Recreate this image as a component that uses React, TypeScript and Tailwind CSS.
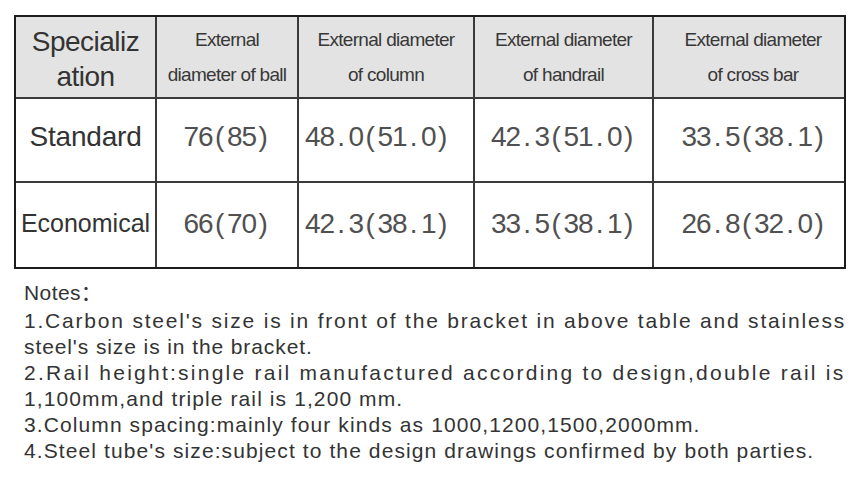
import React from "react";

const Mono = ({ text }: { text: string }) => (
  <span className="inline-flex text-[#505050]">
    {text.split("").map((c, i) => (
      <span key={i} className="inline-block w-[14.5px] text-center">
        {c}
      </span>
    ))}
  </span>
);

const cellBase = "flex flex-col items-center justify-center border-[#3a3a3a]";
const head = "text-[#383838] text-[19px] leading-[35px] tracking-[-0.7px]";

export default function App() {
  const font = { fontFamily: '"Liberation Sans", Arial, "Noto Sans CJK SC", sans-serif' };
  return (
    <div className="w-[864px] h-[485px] bg-white overflow-hidden" style={font}>
      <div className="ml-[14px] mt-[15px] w-[832px] border-2 border-[#1c1c1c]">
        <div className="grid grid-cols-[141px_142px_176px_179px_190px] grid-rows-[82px_84px_84px]">
          {/* header */}
          <div className={`${cellBase} border-r-2 border-b-2 bg-[#e3e3e3] text-[#333] text-[28px] leading-[35px] tracking-[-0.5px] pt-[3px]`}>
            <span>Specializ</span>
            <span>ation</span>
          </div>
          <div className={`${cellBase} border-r-2 border-b-2 bg-[#e3e3e3] ${head}`}>
            <span>External</span>
            <span>diameter of ball</span>
          </div>
          <div className={`${cellBase} border-r-2 border-b-2 bg-[#e3e3e3] ${head}`}>
            <span>External diameter</span>
            <span>of column</span>
          </div>
          <div className={`${cellBase} border-r-2 border-b-2 bg-[#e3e3e3] ${head}`}>
            <span>External diameter</span>
            <span>of handrail</span>
          </div>
          <div className={`${cellBase} border-b-2 bg-[#e3e3e3] ${head} pl-[8px]`}>
            <span>External diameter</span>
            <span>of cross bar</span>
          </div>

          {/* Standard row */}
          <div className={`${cellBase} border-r-2 border-b-2 text-[#333] text-[28px] tracking-[-0.2px] pb-[6px]`}>
            Standard
          </div>
          <div className={`${cellBase} border-r-2 border-b-2 text-[28px] pb-[6px]`}>
            <Mono text="76(85)" />
          </div>
          <div className="flex items-center justify-start pl-[6px] border-[#3a3a3a] border-r-2 border-b-2 text-[28px] pb-[6px]">
            <Mono text="48.0(51.0)" />
          </div>
          <div className={`${cellBase} border-r-2 border-b-2 text-[28px] pb-[6px]`}>
            <Mono text="42.3(51.0)" />
          </div>
          <div className={`${cellBase} border-b-2 text-[28px] pb-[6px] pl-[10px]`}>
            <Mono text="33.5(38.1)" />
          </div>

          {/* Economical row */}
          <div className={`${cellBase} border-r-2 text-[#333] text-[25px] pb-[3px]`}>
            Economical
          </div>
          <div className={`${cellBase} border-r-2 text-[28px] pb-[3px]`}>
            <Mono text="66(70)" />
          </div>
          <div className="flex items-center justify-start pl-[6px] border-[#3a3a3a] border-r-2 text-[28px] pb-[3px]">
            <Mono text="42.3(38.1)" />
          </div>
          <div className={`${cellBase} border-r-2 text-[28px] pb-[3px]`}>
            <Mono text="33.5(38.1)" />
          </div>
          <div className={`${cellBase} text-[28px] pb-[3px] pl-[10px]`}>
            <Mono text="26.8(32.0)" />
          </div>
        </div>
      </div>

      <div className="mt-[11px] pl-[24px] text-[21px] text-[#333] leading-[26px] whitespace-nowrap">
        <div className="tracking-[0.4px] mb-[2px]">Notes：</div>
        <div className="tracking-[1.8px]">1.Carbon steel's size is in front of the bracket in above table and stainless</div>
        <div className="tracking-[0.9px]">steel's size is in the bracket.</div>
        <div className="tracking-[2.25px]">2.Rail height:single rail manufactured according to design,double rail is</div>
        <div className="tracking-[1.1px]">1,100mm,and triple rail is 1,200 mm.</div>
        <div className="tracking-[1.1px]">3.Column spacing:mainly four kinds as 1000,1200,1500,2000mm.</div>
        <div className="tracking-[1.1px]">4.Steel tube's size:subject to the design drawings confirmed by both parties.</div>
      </div>
    </div>
  );
}
